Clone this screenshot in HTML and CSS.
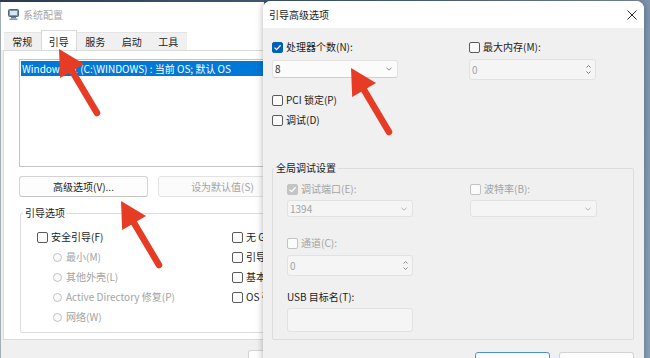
FILE: index.html
```html
<!DOCTYPE html>
<html lang="zh-CN">
<head>
    <meta charset="UTF-8">
    <meta name="viewport" content="width=device-width, initial-scale=1.0">
    <title>系统配置 - 引导高级选项</title>
    <link rel="stylesheet" href="styles.css">
</head>
<body>
    <div class="desktop">
        <!-- janela principal: 系统配置 -->
        <div class="window msconfig">
            <div class="titlebar">
                <svg class="app-icon" width="11" height="11" viewBox="0 0 11 11">
                    <rect x="0.5" y="0.5" width="10" height="7" rx="1" fill="#7d93ad" stroke="#4f6680"/>
                    <rect x="2" y="2" width="7" height="4" fill="#d9e6f2"/>
                    <rect x="3" y="8" width="5" height="1.5" fill="#6d7f94"/>
                    <rect x="1.5" y="9.5" width="8" height="1.5" fill="#8a9bb0"/>
                </svg>
                <span class="title inactive">系统配置</span>
            </div>
            <div class="tabs">
                <span class="tab">常规</span>
                <span class="tab active">引导</span>
                <span class="tab">服务</span>
                <span class="tab">启动</span>
                <span class="tab">工具</span>
            </div>
            <div class="panel">
                <div class="os-list">
                    <div class="os-item selected">Windows 11 (C:\WINDOWS) : 当前 OS; 默认 OS</div>
                </div>
                <div class="btn-row">
                    <button class="btn">高级选项(V)...</button>
                    <button class="btn" disabled>设为默认值(S)</button>
                </div>
                <fieldset class="group boot-group">
                    <legend>引导选项</legend>
                    <div class="boot-cols">
                        <div class="boot-col-a">
                            <label class="row"><span class="check"></span>安全引导(F)</label>
                            <label class="row sub disabled"><span class="radio"></span>最小(M)</label>
                            <label class="row sub disabled"><span class="radio"></span>其他外壳(L)</label>
                            <label class="row sub disabled"><span class="radio"></span>Active Directory 修复(P)</label>
                            <label class="row sub disabled"><span class="radio"></span>网络(W)</label>
                        </div>
                        <div class="boot-col-b">
                            <label class="row"><span class="check"></span>无 GUI 引导(N)</label>
                            <label class="row"><span class="check"></span>引导日志(B)</label>
                            <label class="row"><span class="check"></span>基本视频(E)</label>
                            <label class="row"><span class="check"></span>OS 引导信息(O)</label>
                        </div>
                    </div>
                </fieldset>
            </div>
            <div class="footer">
                <button class="btn small">确定</button>
                <button class="btn small">取消</button>
            </div>
        </div>

        <!-- diálogo: 引导高级选项 -->
        <div class="window dialog">
            <div class="dlg-title">
                <span class="title">引导高级选项</span>
                <svg class="close" width="10" height="10" viewBox="0 0 10 10">
                    <path d="M0.5 0.5 L9.5 9.5 M9.5 0.5 L0.5 9.5" stroke="#2b2b2b" stroke-width="1"/>
                </svg>
            </div>
            <div class="dlg-body">
                <div class="dlg-cols">
                    <div class="dlg-col-a">
                        <label class="row">
                            <span class="check checked">
                                <svg width="9" height="9" viewBox="0 0 9 9"><path d="M1.5 4.6 L3.6 6.6 L7.6 2.2" fill="none" stroke="#fff" stroke-width="1.3"/></svg>
                            </span>处理器个数(N):
                        </label>
                        <div class="combo">
                            <span class="value">8</span>
                            <svg class="chev" width="6" height="4" viewBox="0 0 6 4"><path d="M0.5 0.8 L3 3.2 L5.5 0.8" fill="none" stroke="#8a8a8a"/></svg>
                        </div>
                        <label class="row pci"><span class="check"></span>PCI 锁定(P)</label>
                        <label class="row debug"><span class="check"></span>调试(D)</label>
                    </div>
                    <div class="dlg-col-b">
                        <label class="row"><span class="check"></span>最大内存(M):</label>
                        <div class="field spin-field disabled">
                            <span class="value">0</span>
                            <span class="spin">
                                <svg width="5" height="3" viewBox="0 0 5 3"><path d="M0.5 2.5 L2.5 0.5 L4.5 2.5" fill="none" stroke="#7a7a7a"/></svg>
                                <svg width="5" height="3" viewBox="0 0 5 3"><path d="M0.5 0.5 L2.5 2.5 L4.5 0.5" fill="none" stroke="#7a7a7a"/></svg>
                            </span>
                        </div>
                    </div>
                </div>

                <fieldset class="group debug-group">
                    <legend>全局调试设置</legend>
                    <div class="g-cols">
                        <div class="g-col-a">
                            <label class="row disabled">
                                <span class="check checked off">
                                    <svg width="9" height="9" viewBox="0 0 9 9"><path d="M1.5 4.6 L3.6 6.6 L7.6 2.2" fill="none" stroke="#fff" stroke-width="1.3"/></svg>
                                </span>调试端口(E):
                            </label>
                            <div class="combo disabled slim">
                                <span class="value">1394</span>
                                <svg class="chev" width="6" height="4" viewBox="0 0 6 4"><path d="M0.5 0.8 L3 3.2 L5.5 0.8" fill="none" stroke="#b5b5b5"/></svg>
                            </div>
                            <label class="row disabled channel"><span class="check off"></span>通道(C):</label>
                            <div class="field spin-field disabled">
                                <span class="value">0</span>
                                <span class="spin">
                                    <svg width="5" height="3" viewBox="0 0 5 3"><path d="M0.5 2.5 L2.5 0.5 L4.5 2.5" fill="none" stroke="#8a8a8a"/></svg>
                                    <svg width="5" height="3" viewBox="0 0 5 3"><path d="M0.5 0.5 L2.5 2.5 L4.5 0.5" fill="none" stroke="#8a8a8a"/></svg>
                                </span>
                            </div>
                            <div class="usb-label">USB 目标名(T):</div>
                            <div class="field usb-field disabled"></div>
                        </div>
                        <div class="g-col-b">
                            <label class="row disabled"><span class="check off"></span>波特率(B):</label>
                            <div class="combo disabled slim wide">
                                <span class="value"></span>
                                <svg class="chev" width="6" height="4" viewBox="0 0 6 4"><path d="M0.5 0.8 L3 3.2 L5.5 0.8" fill="none" stroke="#b5b5b5"/></svg>
                            </div>
                        </div>
                    </div>
                </fieldset>

                <div class="dlg-buttons">
                    <button class="btn small default">确定</button>
                    <button class="btn small">取消</button>
                </div>
            </div>
        </div>

        <!-- setas vermelhas -->
        <svg class="arrows" width="650" height="358" viewBox="0 0 650 358">
            <defs>
                <g id="seta">
                    <line x1="11" y1="18.5" x2="38" y2="64" stroke="#e63b24" stroke-width="6.5" stroke-linecap="round"/>
                    <polygon points="0,0 25,15 1.2,29" fill="#e63b24"/>
                </g>
            </defs>
            <use href="#seta" x="59" y="49"/>
            <use href="#seta" x="121" y="201"/>
            <use href="#seta" x="351" y="68"/>
        </svg>
    </div>
</body>
</html>
```

FILE: styles.css
```css
* {
    box-sizing: border-box;
}
body {
    margin: 0;
    font-family: "Noto Sans CJK SC", "Noto Sans", sans-serif;
    font-size: 10px;
    color: #1b1b1b;
}
.desktop {
    position: relative;
    width: 650px;
    height: 358px;
    overflow: hidden;
    background: linear-gradient(100deg, #2a3a50 0%, #4b6480 55%, #8aa0b8 100%);
}
.window {
    position: absolute;
}
.title {
    line-height: 16px;
}
.title.inactive {
    color: #a5a5a5;
}

/* 系统配置 (a parte à direita fica sob o diálogo) */
.msconfig {
    left: 0;
    top: 2px;
    width: 264px;
    height: 370px;
    overflow: hidden;
    background: #f0f0f0;
    border-left: 1px solid #a3adb8;
}
.titlebar {
    height: 25px;
    background: #ffffff;
    display: flex;
    align-items: center;
    gap: 4px;
    padding-left: 7px;
}
.tabs {
    display: flex;
    height: 23px;
    padding: 5px 0 0 3px;
    background: #ffffff;
}
.tab {
    width: 36.5px;
    height: 18px;
    line-height: 18px;
    text-align: center;
    background: #f0f0f0;
    border-top: 1px solid #e4e4e4;
}
.tab.active {
    background: #ffffff;
    height: 20px;
    margin-top: -2px;
    line-height: 21px;
    border: 1px solid #d9d9d9;
    border-bottom: none;
    position: relative;
    z-index: 1;
}
.panel {
    margin-left: 2px;
    width: 320px;
    height: 290px;
    background: #ffffff;
    border: 1px solid #dadada;
    padding: 8px 0 0 15px;
}
.os-list {
    width: 290px;
    height: 108px;
    border: 1px solid #c4c4c4;
    padding: 1px;
}
.os-item {
    height: 15px;
    line-height: 15px;
    padding-left: 1px;
    white-space: nowrap;
}
.os-item.selected {
    background: #0078d7;
    color: #ffffff;
}
.btn-row {
    display: flex;
    gap: 10px;
    margin-top: 9px;
}
.btn {
    width: 129px;
    height: 21px;
    flex: none;
    font-family: inherit;
    font-size: 10px;
    line-height: 14px;
    color: #1b1b1b;
    background: #fdfdfd;
    border: 1px solid #d3d3d3;
    border-bottom-color: #c4c4c4;
    border-radius: 3px;
    padding: 0;
}
.btn:disabled {
    color: #a3a3a3;
    background: #fbfbfb;
    border-color: #e3e3e3;
}
.btn.small {
    width: 75px;
    height: 24px;
}
.btn.default {
    border-color: #4a8fcf;
}
.group {
    margin: 0;
    padding: 0;
    border: 1px solid #dddddd;
    border-radius: 2px;
}
.group legend {
    padding: 0 2px;
    line-height: 16px;
}
.boot-group {
    margin: 8px 0 0 1px;
    width: 290px;
}
.boot-group legend {
    margin-left: 2px;
}
.boot-cols {
    display: flex;
    padding: 6px 0 5px 16px;
}
.boot-col-a {
    width: 195px;
    flex: none;
}
.row {
    display: flex;
    align-items: center;
    gap: 3px;
    height: 16px;
    line-height: 16px;
    white-space: nowrap;
}
.boot-cols .row {
    height: 20px;
}
.row.sub {
    padding-left: 16px;
    gap: 4px;
}
.disabled {
    color: #a3a3a3;
}
.check {
    width: 11px;
    height: 11px;
    flex: none;
    display: flex;
    align-items: center;
    justify-content: center;
    border: 1px solid #5a5a5a;
    border-radius: 2px;
    background: #fbfbfb;
}
.check.off {
    border-color: #c2c2c2;
}
.check.checked {
    background: #005fb8;
    border-color: #005fb8;
}
.check.checked.off {
    background: #c4c4c4;
    border-color: #c4c4c4;
}
.radio {
    width: 9px;
    height: 9px;
    flex: none;
    border: 1px solid #c2c2c2;
    border-radius: 50%;
    background: #fbfbfb;
}
.footer {
    display: flex;
    gap: 9px;
    padding: 10px 0 0 247px;
}

/* 引导高级选项 */
.dialog {
    left: 263px;
    top: 1px;
    width: 381px;
    height: 372px;
    background: #f0f0f0;
    border-radius: 8px 8px 0 0;
    box-shadow: 0 0 7px rgba(0, 0, 0, 0.3);
    overflow: hidden;
    z-index: 2;
}
.dlg-title {
    height: 27px;
    background: #ffffff;
    display: flex;
    align-items: center;
    justify-content: space-between;
    padding: 0 7px 0 6px;
}
.dlg-body {
    padding: 11px 10px 0 9px;
}
.dlg-cols {
    display: flex;
}
.dlg-col-a {
    width: 197px;
}
.combo,
.field {
    width: 126px;
    display: flex;
    align-items: center;
    justify-content: space-between;
    border: 1px solid #e2e2e2;
    border-radius: 3px;
    background: #fbfbfb;
}
.value {
    line-height: 12px;
}
.combo {
    height: 18px;
    margin-top: 5px;
    padding: 0 5px 0 2px;
    border-bottom-color: #cfcfcf;
}
.combo.disabled,
.field.disabled {
    background: #f5f5f5;
    border-color: #e2e2e2;
    color: #a3a3a3;
}
.combo.slim {
    height: 17px;
    margin-top: 3px;
}
.combo.wide {
    width: 127px;
}
.chev {
    flex: none;
}
.row.pci {
    margin-top: 14px;
}
.row.debug {
    margin-top: 4px;
}
.spin-field {
    height: 21px;
    margin-top: 4px;
    padding-left: 2px;
}
.dlg-col-b .spin-field {
    width: 127px;
}
.spin {
    width: 13px;
    height: 100%;
    display: flex;
    flex-direction: column;
    align-items: center;
    justify-content: space-around;
    padding: 3px 0;
}
.debug-group {
    margin-top: 32px;
    width: 362px;
}
.debug-group legend {
    margin-left: 1px;
    color: #1b1b1b;
}
.g-cols {
    display: flex;
    padding: 5px 0 7px 14px;
}
.g-col-a {
    width: 183px;
}
.row.channel {
    margin-top: 18px;
}
.usb-label {
    margin-top: 13px;
    height: 16px;
    line-height: 16px;
    color: #1b1b1b;
}
.usb-field {
    height: 24px;
    margin-top: 3px;
}
.dlg-buttons {
    display: flex;
    justify-content: flex-end;
    gap: 9px;
    margin-top: 12px;
}
.arrows {
    position: absolute;
    left: 0;
    top: 0;
    z-index: 5;
    pointer-events: none;
}
```
